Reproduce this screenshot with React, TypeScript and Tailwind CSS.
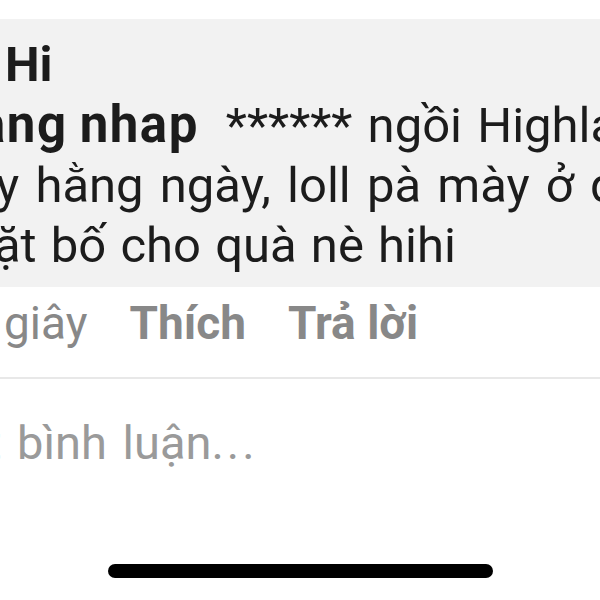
import React from "react";

export default function App() {
  const font = { fontFamily: "Roboto, 'Noto Sans', sans-serif" };
  return (
    <div className="w-[600px] h-[600px] bg-white overflow-hidden flex flex-col" style={font}>
      <div className="h-[19px] shrink-0" />
      <div className="bg-[#f2f2f2] h-[268px] shrink-0 pt-[16px] overflow-hidden text-[#1c1c1c] text-[49px] leading-[60px]">
        <div className="whitespace-nowrap font-bold pl-[5px]">Hi</div>
        <div className="whitespace-nowrap">
          <span className="font-bold text-[51px] tracking-[1.5px] [word-spacing:-2px] inline-block -ml-[22px]">ang nhap</span>
          <span className="ml-[27px] [word-spacing:3px]">****** ngồi Highlands</span>
        </div>
        <div className="whitespace-nowrap -ml-[31px] [word-spacing:4px]">ny hằng ngày, loll pà mày ở đâu</div>
        <div className="whitespace-nowrap -ml-[49px] [word-spacing:2px]">mặt bố cho quà nè hihi</div>
      </div>
      <div className="h-[72px] shrink-0 flex items-center gap-[42px] pl-[4px] text-[46px] text-[#888888] whitespace-nowrap">
        <span>giây</span>
        <span className="font-bold">Thích</span>
        <span className="font-bold">Trả lời</span>
      </div>
      <div className="h-[18px] shrink-0" />
      <div className="h-[2px] bg-[#e8e8e8] shrink-0" />
      <div className="h-[185px] shrink-0 pt-[29px] text-[47px] leading-normal text-[#9a9a9a] whitespace-nowrap [word-spacing:4px]">
        <div className="-ml-[14px]">
          t bình luận<span className="tracking-[3px]">...</span>
        </div>
      </div>
      <div className="mx-auto w-[385px] h-[14px] rounded-full bg-black shrink-0" />
    </div>
  );
}
